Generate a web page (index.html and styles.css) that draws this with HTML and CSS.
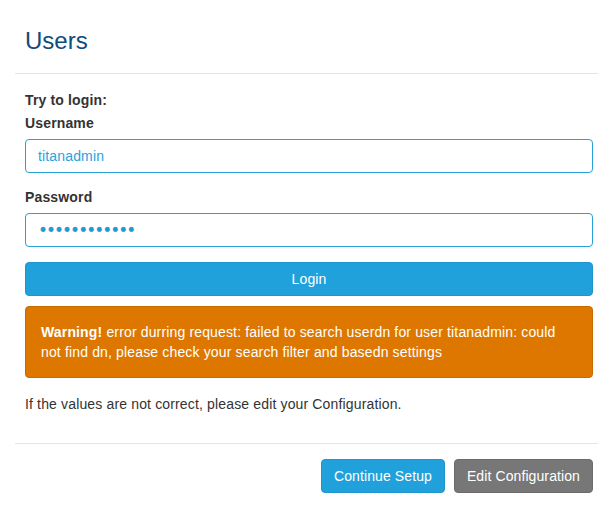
FILE: index.html
```html
<!DOCTYPE html>
<html>
<head>
<meta charset="utf-8">
<link rel="stylesheet" href="styles.css">
</head>
<body>
<div class="modal">
  <div class="modal-header">
    <h3 class="modal-title">Users</h3>
  </div>
  <div class="modal-body">
    <p class="intro">Try to login:</p>
    <div class="form-group">
      <label class="label" for="u">Username</label>
      <input class="input" id="u" type="text" value="titanadmin">
    </div>
    <div class="form-group">
      <label class="label" for="p">Password</label>
      <input class="input input-password" id="p" type="password" value="titanadmin12">
    </div>
    <button class="btn btn-primary btn-block" type="button">Login</button>
    <div class="alert"><strong>Warning!</strong> error durring request: failed to search userdn for user titanadmin: could not find dn, please check your search filter and basedn settings</div>
    <p class="note">If the values are not correct, please edit your Configuration.</p>
  </div>
  <div class="modal-footer">
    <button class="btn btn-primary" type="button">Continue Setup</button>
    <button class="btn btn-default" type="button">Edit Configuration</button>
  </div>
</div>
</body>
</html>
```
FILE: styles.css
```css
* { box-sizing: border-box; }
html, body { margin: 0; padding: 0; background: #fff; }
body {
  font-family: "Liberation Sans", Arial, sans-serif;
  font-size: 14px;
  line-height: 20px;
  color: #333;
  letter-spacing: 0.15px;
}
.modal { padding: 0 15px; }
.modal-header {
  padding: 28px 10px 19px;
  border-bottom: 1px solid #e5e5e5;
}
.modal-title {
  margin: 0;
  font-size: 24px;
  line-height: 26px;
  font-weight: normal;
  color: #0d4c7b;
  letter-spacing: 0;
}
.modal-body { padding: 16px 5px 29px 10px; }
.intro { margin: 0 0 3px; font-weight: bold; }
.form-group { margin-bottom: 14px; }
.form-group + .form-group { margin-bottom: 15px; }
.label {
  display: block;
  font-weight: bold;
  margin-bottom: 6px;
}
.input {
  display: block;
  width: 100%;
  height: 34px;
  padding: 6px 12px;
  font-family: inherit;
  font-size: 14px;
  letter-spacing: 0.15px;
  color: #27a3dc;
  border: 1px solid #27a0da;
  border-radius: 4px;
  background: #fff;
  outline: none;
}
.input-password {
  font-family: "DejaVu Sans", sans-serif;
  font-size: 17px;
  letter-spacing: -2px;
  color: #1f9cd8;
}
.btn {
  display: inline-block;
  height: 34px;
  padding: 6px 12px;
  font-family: inherit;
  font-size: 14px;
  line-height: 20px;
  letter-spacing: 0.1px;
  color: #fff;
  border: 1px solid transparent;
  border-radius: 4px;
  cursor: pointer;
}
.btn-primary { background: #21a1db; border-color: #1e95cc; }
.btn-default { background: #777777; border-color: #6b6b6b; }
.btn-block { display: block; width: 100%; }
.alert {
  margin-top: 10px;
  padding: 15px;
  background: #dd7700;
  border: 1px solid #c86a00;
  border-radius: 4px;
  color: #fff;
}
.alert strong { font-weight: bold; }
.note { margin: 16px 0 0; }
.modal-footer {
  display: flex;
  justify-content: flex-end;
  gap: 9px;
  padding: 15px 5px 21px 10px;
  border-top: 1px solid #e5e5e5;
}
```
